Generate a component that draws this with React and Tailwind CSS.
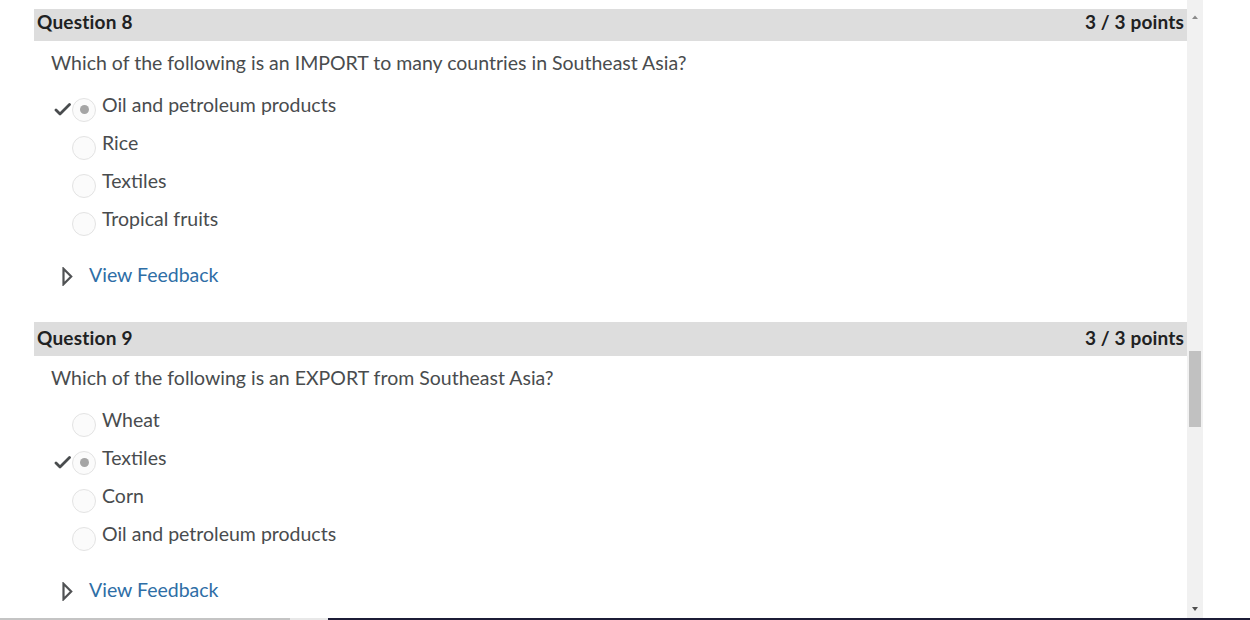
import React from 'react';

const questions = [
  {
    id: 8,
    points: '3 / 3 points',
    text: 'Which of the following is an IMPORT to many countries in Southeast Asia?',
    options: ['Oil and petroleum products', 'Rice', 'Textiles', 'Tropical fruits'],
    correct: 0,
    headerClass: 'h-[32px] pb-[5px]',
  },
  {
    id: 9,
    points: '3 / 3 points',
    text: 'Which of the following is an EXPORT from Southeast Asia?',
    options: ['Wheat', 'Textiles', 'Corn', 'Oil and petroleum products'],
    correct: 1,
    headerClass: 'h-[34px] pb-[2px]',
  },
];

function Check() {
  return (
    <svg width="17" height="14" viewBox="0 0 17 14" className="text-[#494c4e]">
      <path d="M2 8 L6 12 L15.5 2.5" fill="none" stroke="currentColor" strokeWidth="2.8" strokeLinecap="round" strokeLinejoin="round" />
    </svg>
  );
}

function Radio({ checked }) {
  return (
    <div className="w-[24px] h-[24px] rounded-full border border-[#e3e3e3] bg-[#fbfbfb] flex items-center justify-center">
      {checked && <div className="w-[9px] h-[9px] rounded-full bg-[#a5a5a5]" />}
    </div>
  );
}

function Question({ q }) {
  return (
    <div>
      {/* Header */}
      <div className={`${q.headerClass} bg-[#dddddd] flex items-center justify-between pl-[3px] pr-[3px]`}>
        <span className="text-[19px] font-bold text-[#202122] tracking-[0.2px]">Question {q.id}</span>
        <span className="text-[19px] font-bold text-[#202122] tracking-[0.15px]">{q.points}</span>
      </div>

      <div className="pt-[8px] pl-[17px]">
        <p className="h-[28px] leading-[28px] text-[19.5px] text-[#494c4e]">{q.text}</p>
      </div>

      <div className="pt-[9px]">
        {q.options.map((opt, i) => (
          <div key={opt} className="h-[38px] flex items-center">
            <div className="w-[38px] pl-[20px] pt-[8px] flex items-center">
              {i === q.correct && <Check />}
            </div>
            <div className="pt-[9px]">
              <Radio checked={i === q.correct} />
            </div>
            <span className="ml-[6px] text-[19.5px] text-[#494c4e]">{opt}</span>
          </div>
        ))}
      </div>

      <div className="pt-[23px] pl-[28px] h-[51px] flex items-start">
        <div className="h-[28px] flex items-center">
          <svg width="11" height="19" viewBox="0 0 11 19" className="mt-[3px]">
            <path d="M1.5 1.8 L9.2 9.5 L1.5 17.2 Z" fill="none" stroke="#505254" strokeWidth="2.2" strokeLinejoin="miter" />
          </svg>
          <a className="ml-[16px] text-[19.5px] text-[#2e6ea6]">View Feedback</a>
        </div>
      </div>
    </div>
  );
}

export default function App() {
  return (
    <div className="w-[1250px] h-[620px] bg-white overflow-hidden flex flex-col font-['Lato','Liberation_Sans',sans-serif]">
      <div className="flex h-[618px]">
        <div className="w-[1187px] overflow-hidden pl-[34px] pt-[9px]">
          <div className="flex flex-col gap-[33px]">
            {questions.map((q) => (
              <Question key={q.id} q={q} />
            ))}
          </div>
        </div>
        {/* Scrollbar */}
        <div className="w-[16px] bg-[#f1f1f1] flex flex-col items-center">
          <svg width="8" height="6" viewBox="0 0 8 6" className="mt-[14px]">
            <path d="M1 5 L4 1.5 L7 5 Z" fill="#8a8a8a" />
          </svg>
          <div className="mt-[331px] w-[12px] h-[76px] bg-[#c1c1c1]" />
          <div className="flex-1" />
          <svg width="8" height="6" viewBox="0 0 8 6" className="mb-[6px]">
            <path d="M1 1 L7 1 L4 5 Z" fill="#505050" />
          </svg>
        </div>
        <div className="flex-1" />
      </div>
      <div className="flex h-[2px]">
        <div className="w-[290px] bg-[#c4c4c4]" />
        <div className="w-[38px] bg-[#e8e8e8]" />
        <div className="flex-1 bg-[#1c1c36]" />
      </div>
    </div>
  );
}
